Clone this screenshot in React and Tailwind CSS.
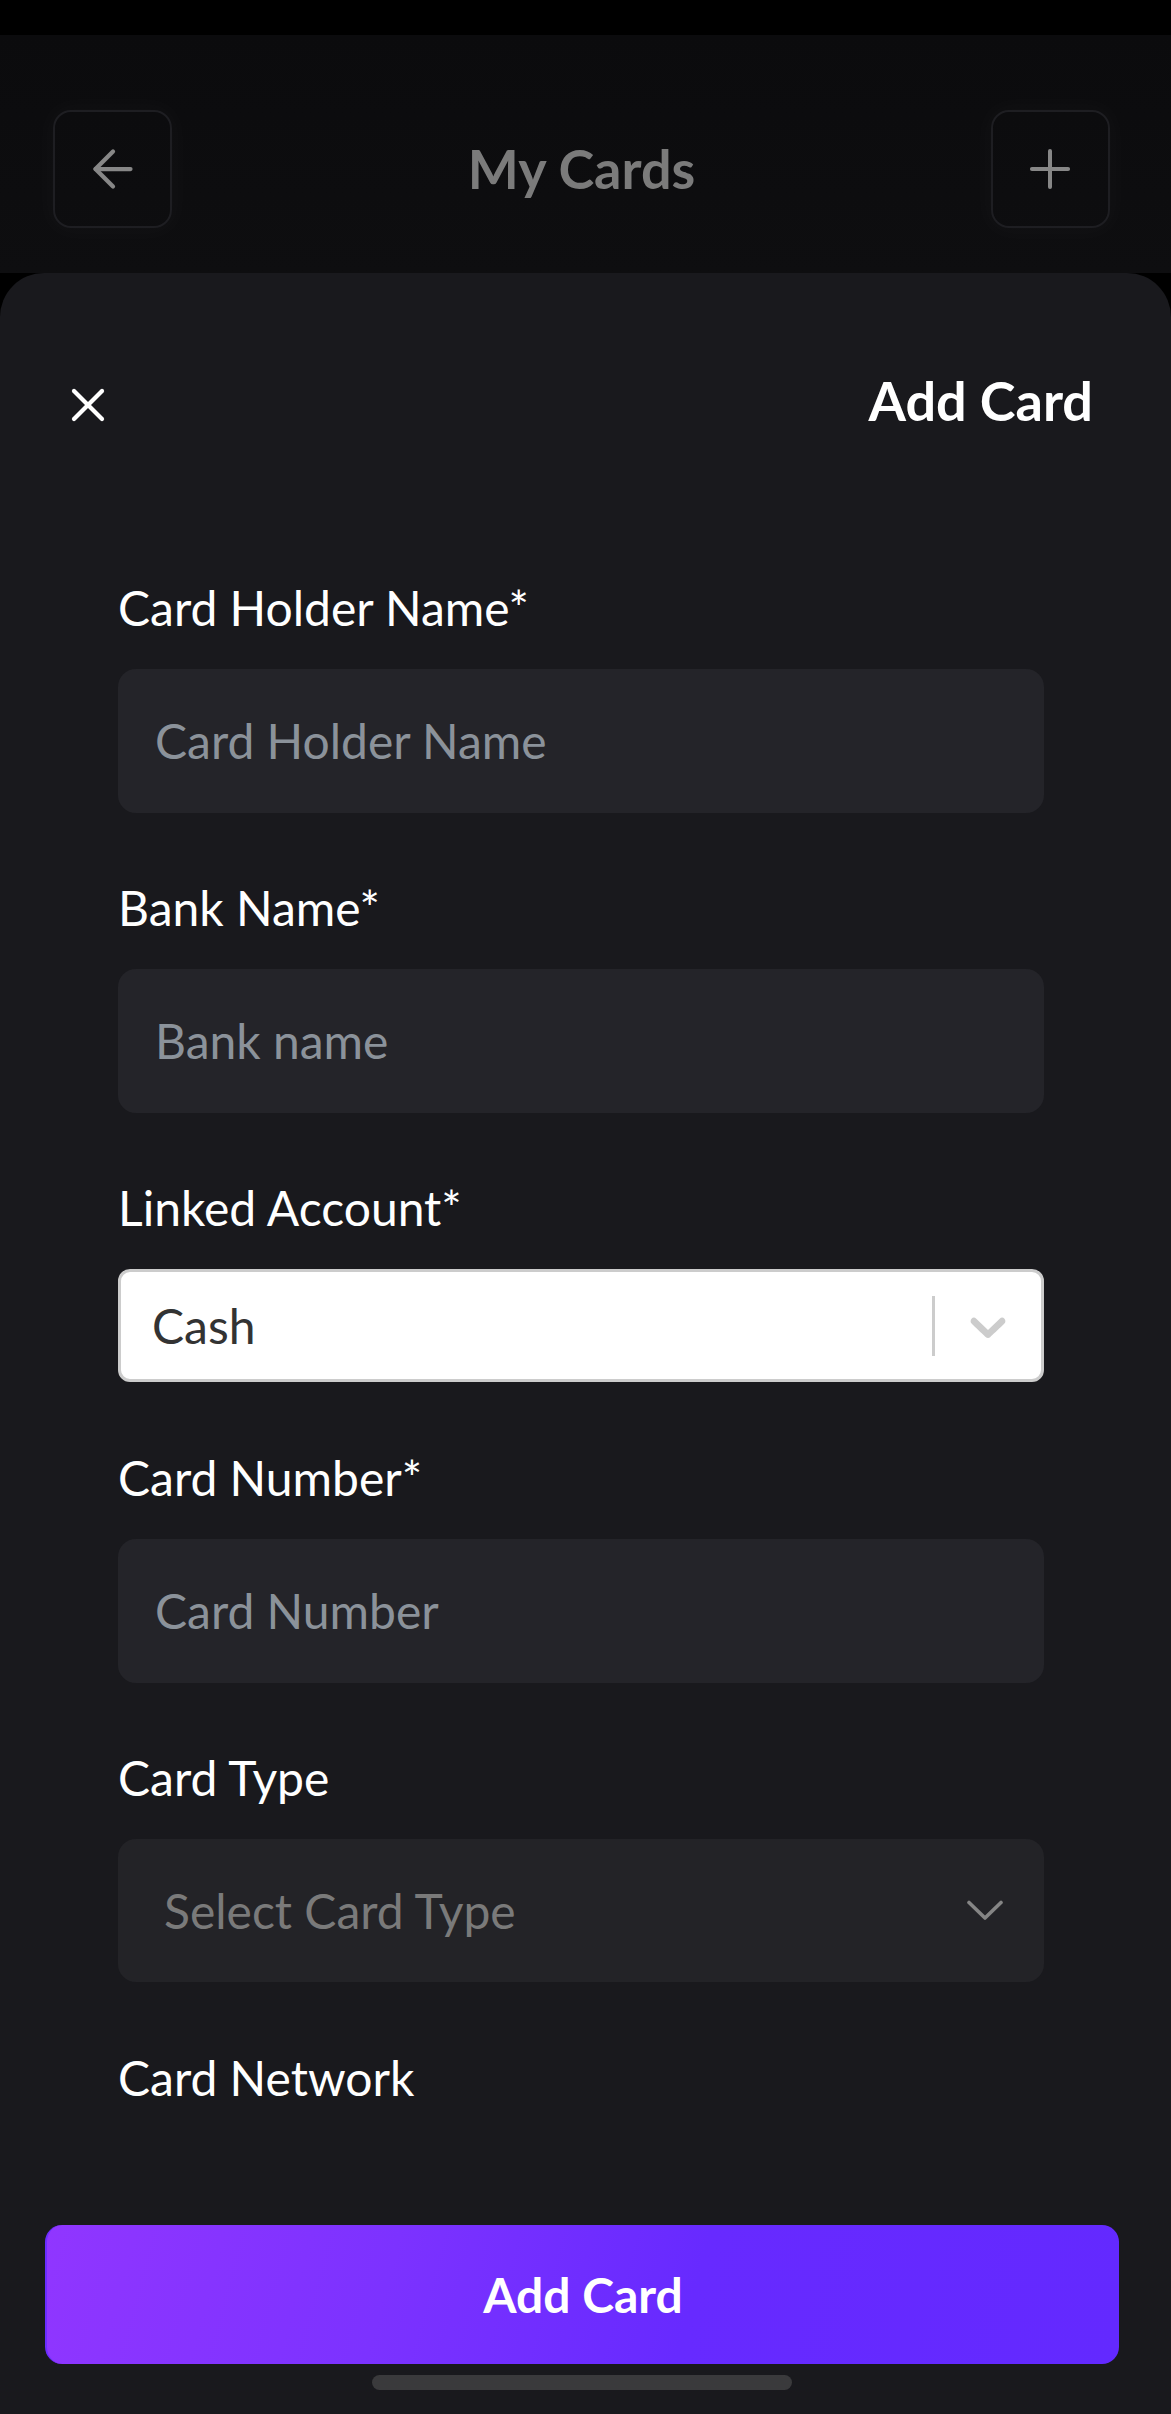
import React from "react";

function Field({ label, placeholder }) {
  return (
    <div className="mb-[66px]">
      <div className="text-[48px] leading-[58px] text-white mb-[32px]">{label}</div>
      <div className="w-[926px] h-[144px] rounded-[18px] bg-[#242429] flex items-center pl-[37px]">
        <span className="text-[48px] leading-[58px] text-[#8b929a]">{placeholder}</span>
      </div>
    </div>
  );
}

export default function App() {
  return (
    <div className="w-[1171px] h-[2414px] overflow-hidden bg-black flex flex-col font-['Lato',sans-serif]">
      <div className="h-[35px] shrink-0 bg-black" />
      <div className="h-[238px] shrink-0 bg-[linear-gradient(180deg,#0b0b0d_0%,#0e0e10_100%)] flex items-start justify-between pl-[53px] pr-[61px] pt-[75px]">
        <div className="w-[119px] h-[118px] rounded-[18px] border-2 border-[#1e1e22] flex items-center justify-center shadow-[0_0_22px_6px_rgba(255,255,255,0.025)]">
          <svg width="60" height="60" viewBox="0 0 24 24" fill="none" stroke="#878787" strokeWidth="1.7" strokeLinecap="round" strokeLinejoin="round">
            <path d="m12 19-7-7 7-7" />
            <path d="M19 12H5" />
          </svg>
        </div>
        <div className="h-[118px] flex items-center text-[54px] leading-[64px] font-bold text-[#7b7b7b]">My Cards</div>
        <div className="w-[119px] h-[118px] rounded-[18px] border-2 border-[#1e1e22] flex items-center justify-center shadow-[0_0_22px_6px_rgba(255,255,255,0.025)]">
          <svg width="62" height="62" viewBox="0 0 24 24" fill="none" stroke="#878787" strokeWidth="1.55" strokeLinecap="round" strokeLinejoin="round">
            <path d="M5 12h14" />
            <path d="M12 5v14" />
          </svg>
        </div>
      </div>

      <div className="flex-1 min-h-0 bg-[#19191d] rounded-t-[44px] flex flex-col">
        <div className="pt-[96px] pl-[71px] pr-[78px] flex items-center justify-between">
          <svg width="34" height="34" viewBox="0 0 34 34" className="mt-[8px]" fill="none" stroke="#ffffff" strokeWidth="4.2" strokeLinecap="round">
            <path d="M3 3 31 31" />
            <path d="M31 3 3 31" />
          </svg>
          <div className="text-[54px] leading-[64px] font-bold text-white">Add Card</div>
        </div>

        <div className="flex-1 min-h-0 overflow-hidden pl-[118px] pt-[146px]">
          <Field label="Card Holder Name*" placeholder="Card Holder Name" />
          <Field label="Bank Name*" placeholder="Bank name" />

          <div className="mb-[67px]">
            <div className="text-[48px] leading-[58px] text-white mb-[32px]">Linked Account*</div>
            <div className="w-[926px] h-[113px] rounded-[12px] border-[3px] border-[#cccccc] bg-white flex items-center">
              <span className="flex-1 pl-[31px] text-[48px] leading-[58px] text-[#333333]">Cash</span>
              <div className="w-[3px] h-[60px] bg-[#cccccc]" />
              <div className="px-[23px] flex items-center">
                <svg width="60" height="60" viewBox="0 0 20 20" fill="#cccccc">
                  <path d="M4.516 7.548c0.436-0.446 1.043-0.481 1.576 0l3.908 3.747 3.908-3.747c0.533-0.481 1.141-0.446 1.574 0 0.436 0.445 0.408 1.197 0 1.615-0.406 0.418-4.695 4.502-4.695 4.502-0.217 0.223-0.502 0.335-0.787 0.335s-0.57-0.112-0.789-0.335c0 0-4.287-4.084-4.695-4.502s-0.436-1.17 0-1.615z" />
                </svg>
              </div>
            </div>
          </div>

          <Field label="Card Number*" placeholder="Card Number" />

          <div className="mb-[67px]">
            <div className="text-[48px] leading-[58px] text-white mb-[32px]">Card Type</div>
            <div className="w-[926px] h-[143px] rounded-[18px] bg-[#232327] flex items-center justify-between pl-[46px] pr-[41px]">
              <span className="text-[48px] leading-[58px] text-[#7a7a7a]">Select Card Type</span>
              <svg width="36" height="21" viewBox="0 0 36 21" fill="none" stroke="#858585" strokeWidth="3.6" strokeLinecap="round" strokeLinejoin="round">
                <polyline points="2,2.5 18,18 34,2.5" />
              </svg>
            </div>
          </div>

          <div className="text-[48px] leading-[58px] text-white">Card Network</div>
        </div>

        <div className="shrink-0 pb-[24px]">
          <div className="ml-[45px] w-[1074px] h-[139px] rounded-[17px] border-l-2 border-[#6a2dff] bg-[linear-gradient(105deg,#9036ff_0%,#7c32ff_32%,#672aff_60%,#6329ff_100%)] flex items-center justify-center">
            <span className="text-[48px] leading-[58px] font-bold text-white">Add Card</span>
          </div>
          <div className="mt-[11px] ml-[372px] w-[420px] h-[15px] rounded-full bg-[#3a3a3c]" />
        </div>
      </div>
    </div>
  );
}
